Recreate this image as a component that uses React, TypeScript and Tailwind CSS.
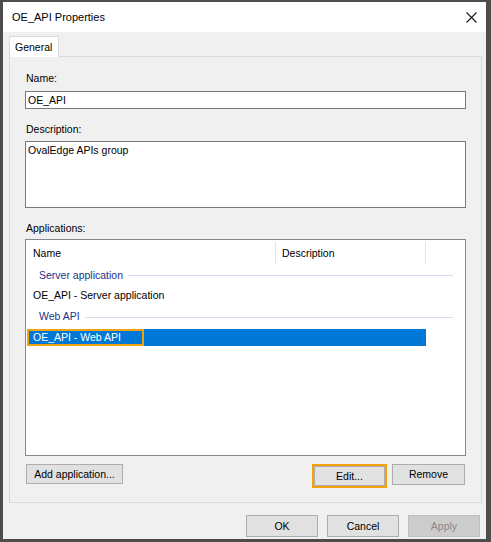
export default function App() {
  return (
    <div className="w-[491px] h-[542px] bg-[#4d4d4d] pt-[2px] pl-[3px] pr-[5px] pb-[3px] font-['Liberation_Sans',Arial,sans-serif] text-[10.5px] text-black">
      <div className="h-full flex flex-col bg-[#f0f0f0]">
        {/* title bar */}
        <div className="h-[30px] bg-white flex items-center justify-between pl-[9px] pr-[9px]">
          <span className="text-[11px] leading-[15px]">OE_API Properties</span>
          <svg width="11" height="11" viewBox="0 0 11 11" className="mt-[1px]">
            <path d="M0.5 0.5 L10.5 10.5 M10.5 0.5 L0.5 10.5" stroke="#1a1a1a" strokeWidth="1.1" />
          </svg>
        </div>

        {/* tabs */}
        <div className="mt-[4px] pl-[6px] flex">
          <div className="relative z-10 -mb-px h-[21px] w-[50px] bg-white border border-b-0 border-[#d9d9d9] pl-[5px] leading-[20px]">
            General
          </div>
        </div>

        <div className="mx-[6px] mr-[4px] h-[447px] border border-[#d9d9d9] bg-[#f0f0f0] pt-[14px] px-[15px] flex flex-col">
          <label className="pl-px leading-[15px]">Name:</label>
          <div className="mt-[5px] h-[18px] border border-[#7a7a7a] bg-white pl-[2px] leading-[16px]">OE_API</div>

          <label className="mt-[13px] pl-px leading-[15px]">Description:</label>
          <div className="mt-[4px] h-[67px] border border-[#7a7a7a] bg-white pl-[2px] pt-[1px] leading-[15px]">
            OvalEdge APIs group
          </div>

          <label className="mt-[13px] pl-px leading-[15px]">Applications:</label>
          <div className="mt-[3px] h-[217px] border border-[#828790] bg-white flex flex-col">
            {/* column header */}
            <div className="h-[25px] flex items-stretch pt-[2px]">
              <div className="w-[250px] pl-[7px] flex items-center border-r border-[#e5e5e5]">Name</div>
              <div className="w-[150px] pl-[6px] flex items-center border-r border-[#e5e5e5]">Description</div>
            </div>

            <div className="h-[21px] flex items-center pl-[13px] pr-[12px] text-[#1e3287]">
              <span>Server application</span>
              <div className="ml-[5px] flex-1 h-px bg-[#d5dcef]" />
            </div>
            <div className="h-[20px] flex items-center pl-[7px]">OE_API - Server application</div>
            <div className="h-[22px] flex items-center pl-[13px] pr-[12px] text-[#1e3287]">
              <span>Web API</span>
              <div className="ml-[5px] flex-1 h-px bg-[#d5dcef]" />
            </div>
            <div className="mt-px ml-px w-[399px] h-[17px] bg-[#0078d7] flex">
              <div className="w-[117px] h-full border-2 border-[#f2a20c] pl-[4px] flex items-center text-white">
                OE_API - Web API
              </div>
            </div>
          </div>

          <div className="mt-[8px] px-px flex items-start">
            <button className="w-[97px] h-[20px] border border-[#adadad] bg-[#e1e1e1] leading-[18px]">
              Add application...
            </button>
            <div className="ml-auto border-2 border-[#f2a20c]">
              <button className="block w-[71px] h-[20px] border border-[#adadad] bg-[#e1e1e1] leading-[18px]">Edit...</button>
            </div>
            <button className="ml-[5px] w-[73px] h-[21px] border border-[#adadad] bg-[#e1e1e1] leading-[19px]">Remove</button>
          </div>
        </div>

        <div className="mt-[12px] pr-[6px] flex justify-end gap-[9px]">
          <button className="w-[72px] h-[22px] border border-[#adadad] bg-[#e1e1e1] leading-[20px]">OK</button>
          <button className="w-[72px] h-[22px] border border-[#adadad] bg-[#e1e1e1] leading-[20px]">Cancel</button>
          <button className="w-[72px] h-[22px] border border-[#bfbfbf] bg-[#cccccc] text-[#8a8a8a] leading-[20px]">Apply</button>
        </div>
      </div>
    </div>
  )
}
